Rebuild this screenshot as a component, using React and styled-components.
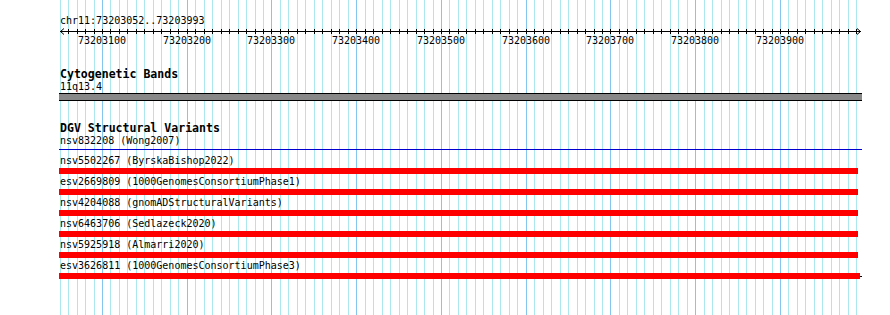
import React from "react";
import styled, { createGlobalStyle } from "styled-components";

const GlobalStyle = createGlobalStyle`
  html, body { margin: 0; padding: 0; background: #ffffff; }
  body { font-family: "DejaVu Sans Mono", "Liberation Mono", monospace; }
`;

const MONO = `"DejaVu Sans Mono", "Liberation Mono", monospace`;

const Page = styled.div`
  width: 890px;
  height: 315px;
  overflow: hidden;
  padding-left: 59px;
  box-sizing: border-box;
  background: #ffffff;
`;

const Panel = styled.div`
  position: relative;
  width: 803px;
  height: 315px;
`;

const GridLayer = styled.svg`
  position: absolute;
  left: 0;
  top: 0;
  z-index: 0;
`;

const Content = styled.div`
  position: relative;
  z-index: 1;
  display: flex;
  flex-direction: column;
`;

const PosLabel = styled.div`
  font-family: ${MONO};
  font-size: 10px;
  line-height: 12px;
  color: #000;
  margin-top: 15px;
  padding-left: 1px;
  white-space: nowrap;
`;

const RulerSvg = styled.svg`
  display: block;
`;

const TrackTitle = styled.div`
  font-family: ${MONO};
  font-weight: bold;
  font-size: 11.55px;
  line-height: 13px;
  color: #000;
  padding-left: 1px;
  margin-top: ${(p) => p.$top || 0}px;
  white-space: nowrap;
`;

const ItemLabel = styled.div`
  font-family: ${MONO};
  font-size: 10px;
  line-height: 12px;
  color: #000;
  padding-left: 1px;
  white-space: nowrap;
`;

const BandBar = styled.div`
  width: 803px;
  height: 6px;
  background: #888888;
  border-top: 1px solid #000;
  border-bottom: 1px solid #000;
`;

const BlueLine = styled.div`
  width: 803px;
  height: 1px;
  background: #0000d0;
  margin-top: 2px;
  margin-bottom: 5px;
`;

const VariantRow = styled.div`
  display: flex;
  flex-direction: column;
  height: 21px;
`;

const BarLine = styled.div`
  display: flex;
  align-items: center;
  margin-top: 1px;
`;

const RedBar = styled.div`
  width: ${(p) => (p.$long ? 802 : 799)}px;
  height: 6px;
  background: #ff0000;
`;

const ContinueTick = styled.div`
  width: 2px;
  height: 1px;
  background: #000;
`;

const ORIGIN = 59;
const gridX = (k) => Math.round(59.6 + k * 8.475) - ORIGIN;
const GRID = Array.from({ length: 95 }, (_, k) => ({ x: gridX(k), dark: k % 10 === 5 }));
const LABELS = Array.from({ length: 9 }, (_, j) => ({
  x: gridX(5 + 10 * j),
  text: String(73203100 + 100 * j),
}));

const variants = [
  "nsv5502267 (ByrskaBishop2022)",
  "esv2669809 (1000GenomesConsortiumPhase1)",
  "nsv4204088 (gnomADStructuralVariants)",
  "nsv6463706 (Sedlazeck2020)",
  "nsv5925918 (Almarri2020)",
  "esv3626811 (1000GenomesConsortiumPhase3)",
];

function Grid() {
  return (
    <GridLayer width="803" height="315" viewBox="0 0 803 315">
      {GRID.map((g, i) => (
        <line
          key={i}
          x1={g.x + 0.5}
          x2={g.x + 0.5}
          y1="0"
          y2="315"
          stroke={g.dark ? "#84c6ee" : "#aae8ee"}
          strokeWidth="1"
        />
      ))}
    </GridLayer>
  );
}

function Ruler() {
  return (
    <RulerSvg width="803" height="41" viewBox="0 0 803 41">
      <line x1="1" x2="802" y1="4.5" y2="4.5" stroke="#000" strokeWidth="1" />
      <polyline points="5,1.5 1.5,4.5 5,7.5" fill="none" stroke="#000" strokeWidth="1" />
      <polyline points="798,1.5 801.5,4.5 798,7.5" fill="none" stroke="#000" strokeWidth="1" />
      {GRID.slice(1).map((g, i) => (
        <line key={i} x1={g.x + 0.5} x2={g.x + 0.5} y1="2" y2="7" stroke="#000" strokeWidth="1" />
      ))}
      {LABELS.map((l) => (
        <text
          key={l.text}
          x={l.x}
          y="16.5"
          textAnchor="middle"
          fontFamily={MONO}
          fontSize="10"
          fill="#000"
        >
          {l.text}
        </text>
      ))}
    </RulerSvg>
  );
}

export default function App() {
  return (
    <>
      <GlobalStyle />
      <Page>
        <Panel>
          <Grid />
          <Content>
            <PosLabel>chr11:73203052..73203993</PosLabel>
            <Ruler />
            <TrackTitle>Cytogenetic Bands</TrackTitle>
            <ItemLabel>11q13.4</ItemLabel>
            <BandBar />
            <TrackTitle $top={21}>DGV Structural Variants</TrackTitle>
            <ItemLabel>nsv832208 (Wong2007)</ItemLabel>
            <BlueLine />
            {variants.map((v, i) => {
              const last = i === variants.length - 1;
              return (
                <VariantRow key={v}>
                  <ItemLabel>{v}</ItemLabel>
                  <BarLine>
                    <RedBar $long={last} />
                    {last && <ContinueTick />}
                  </BarLine>
                </VariantRow>
              );
            })}
          </Content>
        </Panel>
      </Page>
    </>
  );
}
